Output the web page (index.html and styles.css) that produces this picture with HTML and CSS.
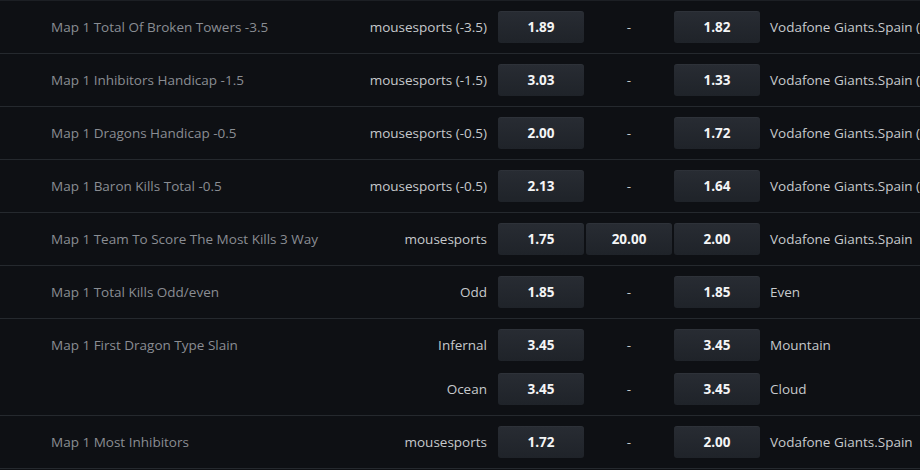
FILE: index.html
```html
<!DOCTYPE html>
<html>
<head>
<meta charset="utf-8">
<link rel="stylesheet" href="styles.css">
</head>
<body>
<div class="markets">
  <div class="row">
    <div class="label">Map 1 Total Of Broken Towers -3.5</div>
    <div class="lines">
      <div class="line">
        <div class="team-l">mousesports (-3.5)</div>
        <div class="odds"><button class="odd">1.89</button><span class="dash">-</span><button class="odd">1.82</button></div>
        <div class="team-r">Vodafone Giants.Spain (+3.5)</div>
      </div>
    </div>
  </div>
  <div class="row">
    <div class="label">Map 1 Inhibitors Handicap -1.5</div>
    <div class="lines">
      <div class="line">
        <div class="team-l">mousesports (-1.5)</div>
        <div class="odds"><button class="odd">3.03</button><span class="dash">-</span><button class="odd">1.33</button></div>
        <div class="team-r">Vodafone Giants.Spain (+1.5)</div>
      </div>
    </div>
  </div>
  <div class="row">
    <div class="label">Map 1 Dragons Handicap -0.5</div>
    <div class="lines">
      <div class="line">
        <div class="team-l">mousesports (-0.5)</div>
        <div class="odds"><button class="odd">2.00</button><span class="dash">-</span><button class="odd">1.72</button></div>
        <div class="team-r">Vodafone Giants.Spain (+0.5)</div>
      </div>
    </div>
  </div>
  <div class="row">
    <div class="label">Map 1 Baron Kills Total -0.5</div>
    <div class="lines">
      <div class="line">
        <div class="team-l">mousesports (-0.5)</div>
        <div class="odds"><button class="odd">2.13</button><span class="dash">-</span><button class="odd">1.64</button></div>
        <div class="team-r">Vodafone Giants.Spain (+0.5)</div>
      </div>
    </div>
  </div>
  <div class="row">
    <div class="label">Map 1 Team To Score The Most Kills 3 Way</div>
    <div class="lines">
      <div class="line">
        <div class="team-l">mousesports</div>
        <div class="odds"><button class="odd">1.75</button><button class="odd">20.00</button><button class="odd">2.00</button></div>
        <div class="team-r">Vodafone Giants.Spain</div>
      </div>
    </div>
  </div>
  <div class="row">
    <div class="label">Map 1 Total Kills Odd/even</div>
    <div class="lines">
      <div class="line">
        <div class="team-l">Odd</div>
        <div class="odds"><button class="odd">1.85</button><span class="dash">-</span><button class="odd">1.85</button></div>
        <div class="team-r">Even</div>
      </div>
    </div>
  </div>
  <div class="row">
    <div class="label">Map 1 First Dragon Type Slain</div>
    <div class="lines">
      <div class="line">
        <div class="team-l">Infernal</div>
        <div class="odds"><button class="odd">3.45</button><span class="dash">-</span><button class="odd">3.45</button></div>
        <div class="team-r">Mountain</div>
      </div>
      <div class="line">
        <div class="team-l">Ocean</div>
        <div class="odds"><button class="odd">3.45</button><span class="dash">-</span><button class="odd">3.45</button></div>
        <div class="team-r">Cloud</div>
      </div>
    </div>
  </div>
  <div class="row">
    <div class="label">Map 1 Most Inhibitors</div>
    <div class="lines">
      <div class="line">
        <div class="team-l">mousesports</div>
        <div class="odds"><button class="odd">1.72</button><span class="dash">-</span><button class="odd">2.00</button></div>
        <div class="team-r">Vodafone Giants.Spain</div>
      </div>
    </div>
  </div>
</div>
</body>
</html>
```

FILE: styles.css
```css
html, body {
  margin: 0;
  padding: 0;
  background: #0e1014;
}
body {
  width: 920px;
  height: 470px;
  overflow: hidden;
  font-family: "Open Sans", "Noto Sans", sans-serif;
  font-size: 13.5px;
}
.markets {
  border-top: 1px solid #1c1f24;
}
.row {
  display: flex;
  align-items: flex-start;
  padding: 10px 0;
  border-bottom: 1px solid #25292e;
  white-space: nowrap;
  overflow: hidden;
}
.label {
  width: 305px;
  padding-left: 51px;
  flex: none;
  line-height: 32px;
  color: #8a8d93;
}
.lines {
  display: flex;
  flex-direction: column;
  gap: 12px;
}
.line {
  display: flex;
  align-items: center;
  height: 32px;
}
.team-l {
  width: 131px;
  margin-right: 11px;
  text-align: right;
  color: #c6c9cc;
}
.team-r {
  margin-left: 10px;
  color: #c6c9cc;
}
.odds {
  display: flex;
  gap: 2px;
}
.odd {
  width: 86px;
  height: 32px;
  border: none;
  border-radius: 3px;
  background: linear-gradient(#282c33, #1f2329);
  box-shadow: inset 0 1px 0 rgba(255,255,255,0.03);
  color: #f4f5f6;
  font-family: inherit;
  font-size: 13.5px;
  font-weight: 700;
  padding: 0;
}
.dash {
  width: 86px;
  text-align: center;
  color: #c6c9cc;
  line-height: 32px;
}
```
